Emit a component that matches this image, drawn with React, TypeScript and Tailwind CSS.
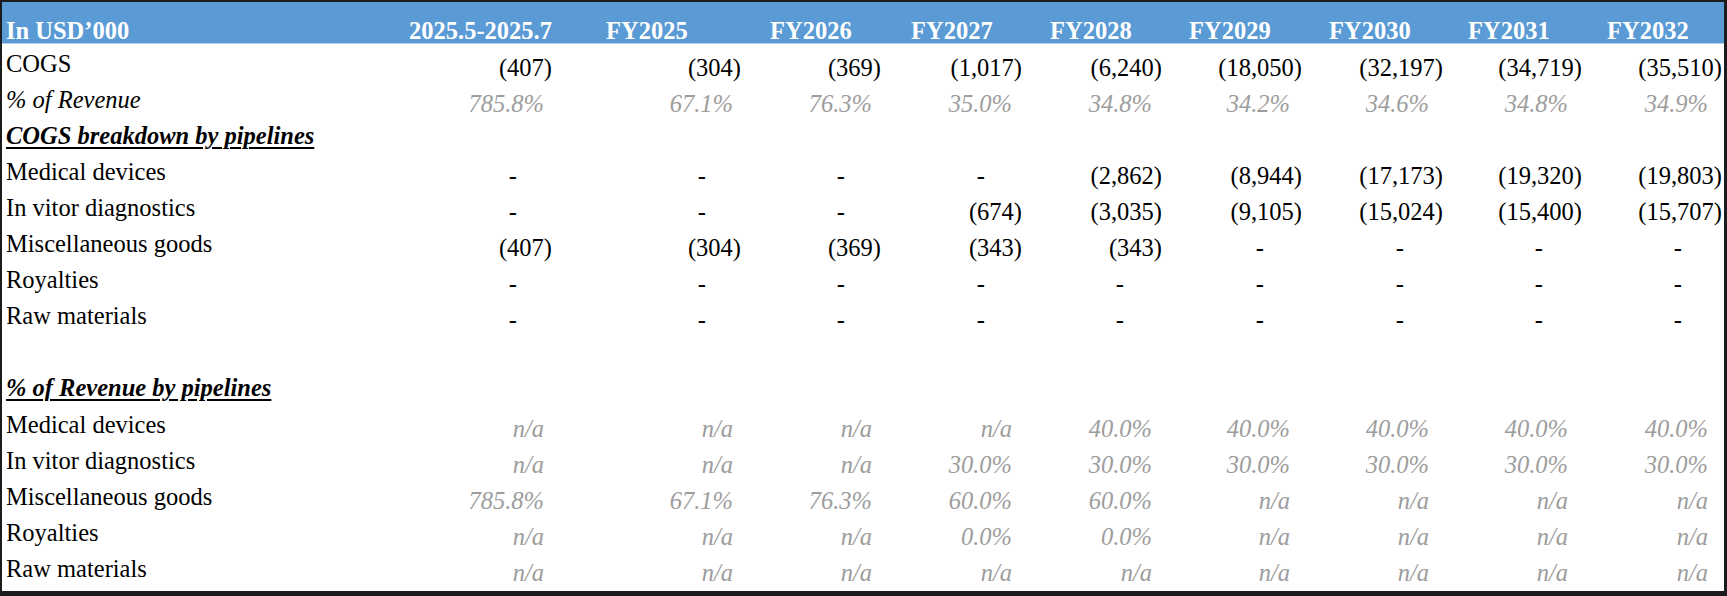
const cols = "grid grid-cols-[410px_140px_189px_140px_141px_140px_140px_141px_139px_140px]";

const years = ["FY2025", "FY2026", "FY2027", "FY2028", "FY2029", "FY2030", "FY2031", "FY2032"];
const yearPad = ["pl-[54px]", "pl-[29px]", "pl-[30px]", "pl-[28px]", "pl-[27px]", "pl-[27px]", "pl-[25px]", "pl-[25px]"];

// right padding per column for italic percentages and for dashes
const pctPad = ["pr-[8px]", "pr-[8px]", "pr-[9px]", "pr-[10px]", "pr-[10px]", "pr-[12px]", "pr-[14px]", "pr-[14px]", "pr-[14px]"];
const dashPad = ["pr-[35px]", "pr-[35px]", "pr-[36px]", "pr-[37px]", "pr-[38px]", "pr-[38px]", "pr-[39px]", "pr-[39px]", "pr-[40px]"];

type Row = {
  label: string;
  kind: "plain" | "italic" | "section" | "blank";
  values: string[];
};

const dash = Array(9).fill("-");
const na = Array(9).fill("n/a");

const rows: Row[] = [
  { label: "COGS", kind: "plain", values: ["(407)", "(304)", "(369)", "(1,017)", "(6,240)", "(18,050)", "(32,197)", "(34,719)", "(35,510)"] },
  { label: "% of Revenue", kind: "italic", values: ["785.8%", "67.1%", "76.3%", "35.0%", "34.8%", "34.2%", "34.6%", "34.8%", "34.9%"] },
  { label: "COGS breakdown by pipelines", kind: "section", values: [] },
  { label: "Medical devices", kind: "plain", values: ["-", "-", "-", "-", "(2,862)", "(8,944)", "(17,173)", "(19,320)", "(19,803)"] },
  { label: "In vitor diagnostics", kind: "plain", values: ["-", "-", "-", "(674)", "(3,035)", "(9,105)", "(15,024)", "(15,400)", "(15,707)"] },
  { label: "Miscellaneous goods", kind: "plain", values: ["(407)", "(304)", "(369)", "(343)", "(343)", "-", "-", "-", "-"] },
  { label: "Royalties", kind: "plain", values: dash },
  { label: "Raw materials", kind: "plain", values: dash },
  { label: "", kind: "blank", values: [] },
  { label: "% of Revenue by pipelines", kind: "section", values: [] },
  { label: "Medical devices", kind: "plain", values: ["n/a", "n/a", "n/a", "n/a", "40.0%", "40.0%", "40.0%", "40.0%", "40.0%"] },
  { label: "In vitor diagnostics", kind: "plain", values: ["n/a", "n/a", "n/a", "30.0%", "30.0%", "30.0%", "30.0%", "30.0%", "30.0%"] },
  { label: "Miscellaneous goods", kind: "plain", values: ["785.8%", "67.1%", "76.3%", "60.0%", "60.0%", "n/a", "n/a", "n/a", "n/a"] },
  { label: "Royalties", kind: "plain", values: ["n/a", "n/a", "n/a", "0.0%", "0.0%", "n/a", "n/a", "n/a", "n/a"] },
  { label: "Raw materials", kind: "plain", values: na },
];

function Cell({ value, i }: { value: string; i: number }) {
  const soft = value.endsWith("%") || value === "n/a";
  if (value === "-") {
    return <div className={`flex items-end justify-end ${dashPad[i]}`}>-</div>;
  }
  return (
    <div
      className={`flex items-end justify-end whitespace-nowrap ${soft ? `italic text-[#9d9d9d] ${pctPad[i]}` : ""}`}
    >
      {value}
    </div>
  );
}

export default function App() {
  return (
    <div className="w-[1727px] h-[596px] overflow-hidden bg-white border-t-2 border-l-2 border-r-[3px] border-b-[5px] border-[#1c1c1c] font-['Liberation_Serif','Times_New_Roman',serif] text-[24.5px] leading-none text-black">
      <div className={`${cols} h-[42px] bg-[#5b9bd5] border-b border-[#b4cfee] font-bold text-white whitespace-nowrap`}>
        <div className="flex items-end pl-[4px]">In USD’000</div>
        <div className="flex items-end justify-end">2025.5-2025.7</div>
        {years.map((y, i) => (
          <div key={y} className={`flex items-end ${yearPad[i]}`}>
            {y}
          </div>
        ))}
      </div>

      {rows.map((r, idx) => (
        <div key={idx} className={`${cols} h-[36.1px]`}>
          <div
            className={`flex items-end pl-[4px] pb-[4px] whitespace-nowrap ${
              r.kind === "italic" ? "italic" : ""
            } ${r.kind === "section" ? "font-bold italic underline decoration-2 underline-offset-[3px]" : ""}`}
          >
            {r.label}
          </div>
          {r.values.map((v, i) => (
            <Cell key={i} value={v} i={i} />
          ))}
        </div>
      ))}
    </div>
  );
}
